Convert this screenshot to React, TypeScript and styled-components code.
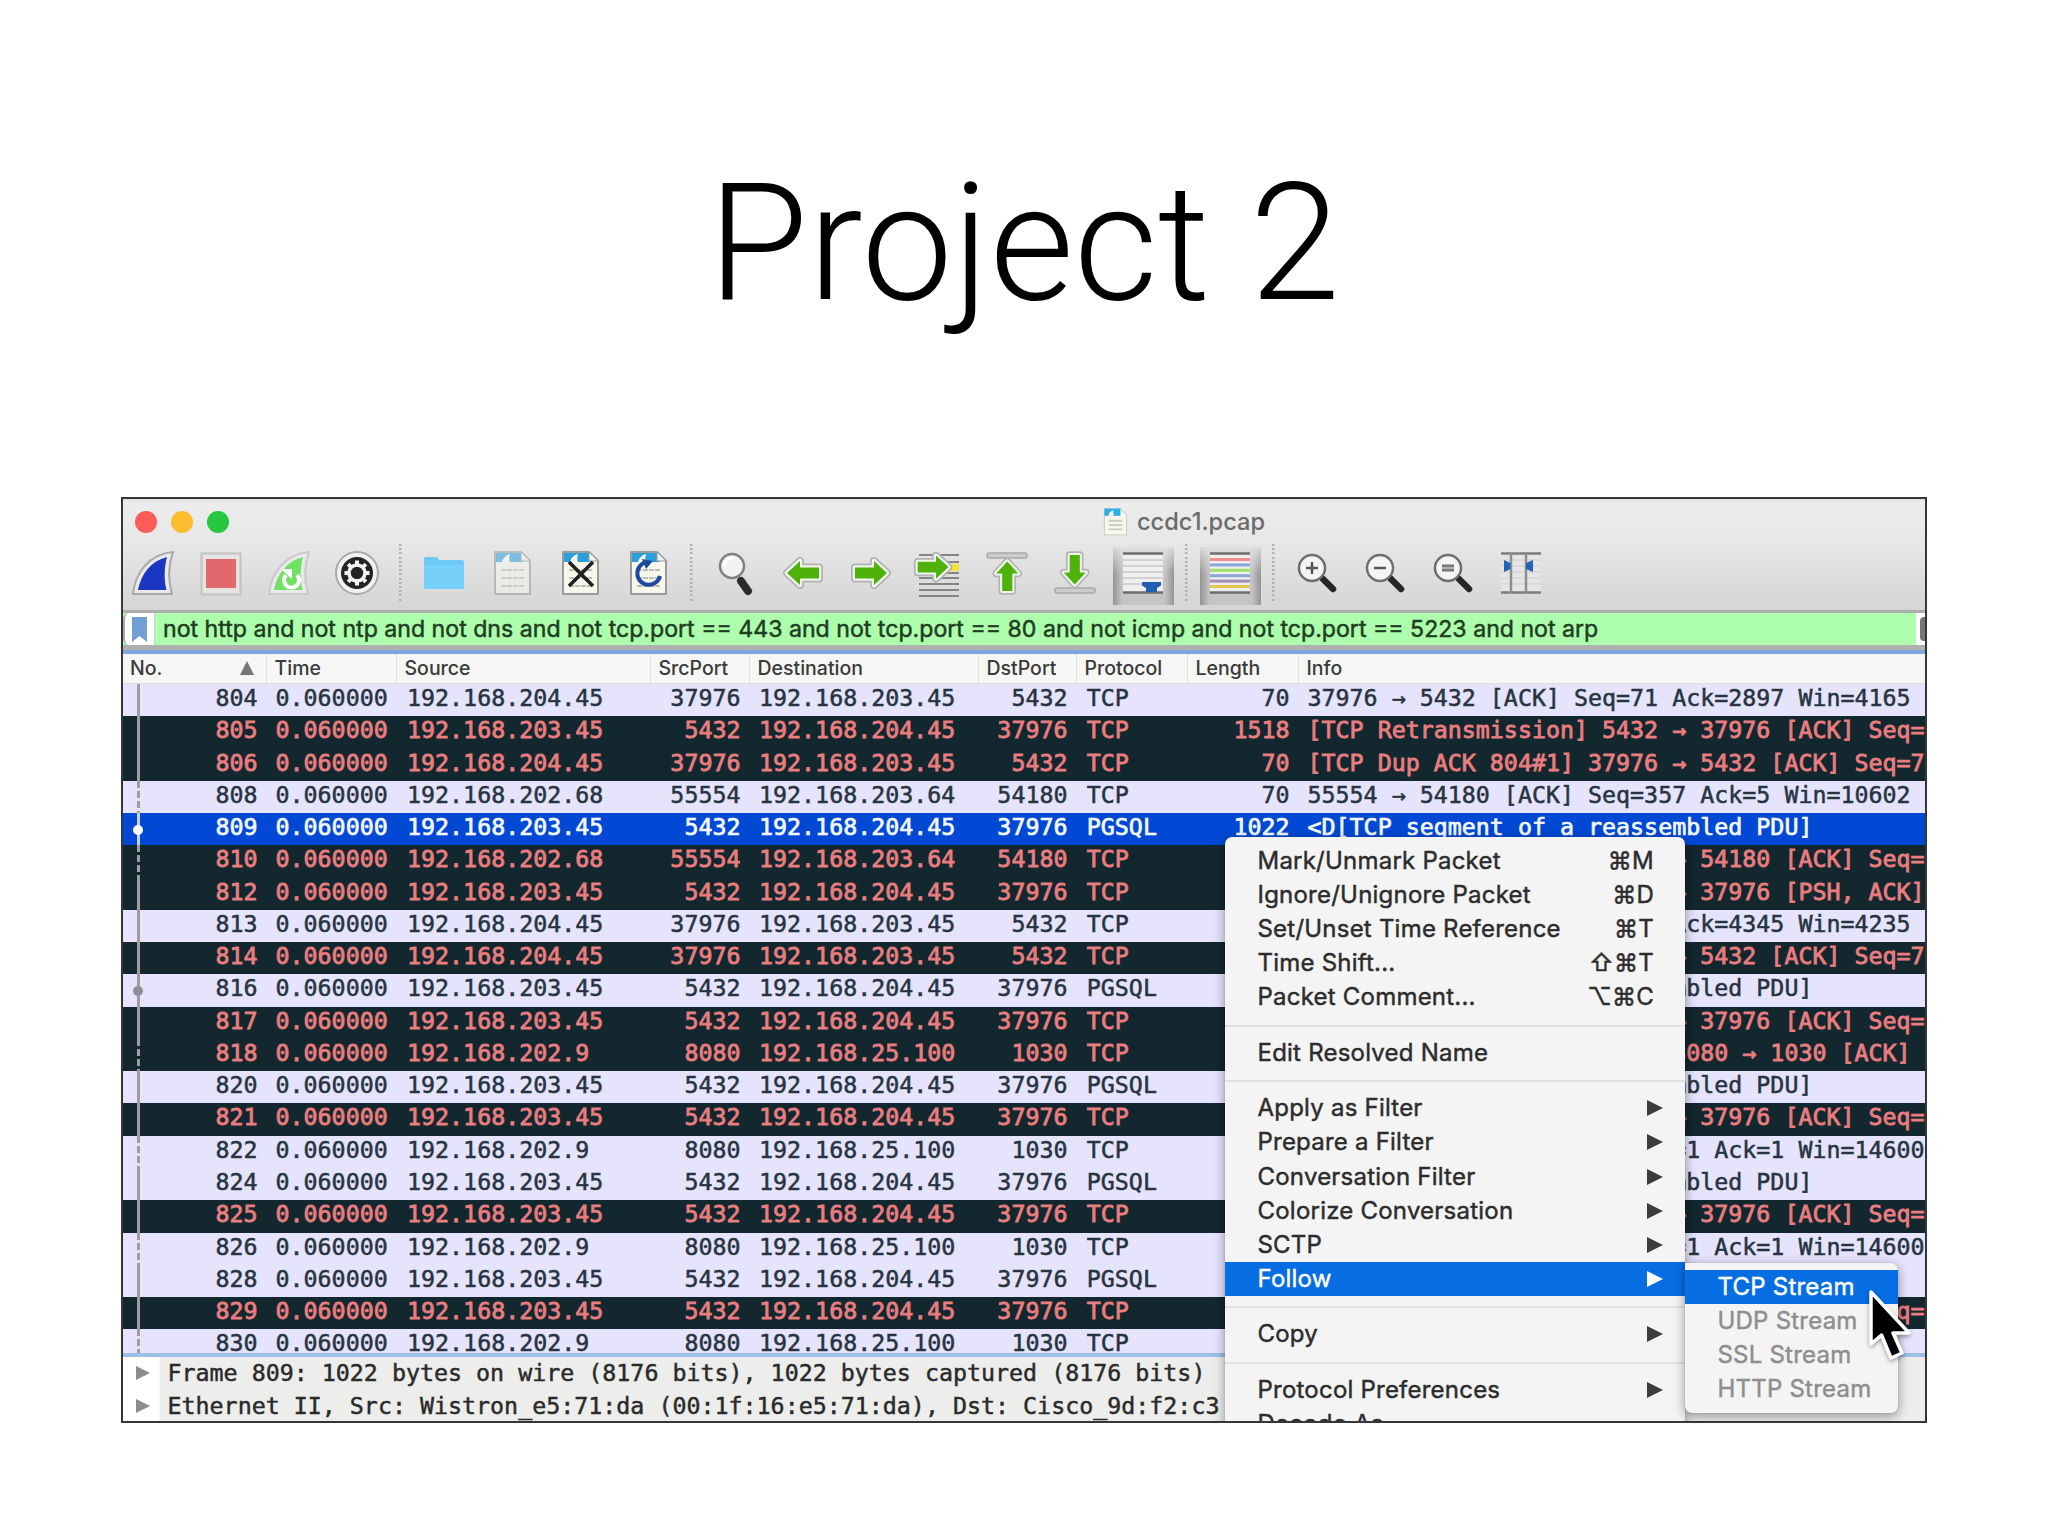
import React from 'react';
import styled, { createGlobalStyle, css } from 'styled-components';

const SANS = `Inter, "Liberation Sans", sans-serif`;
const MONO = `"DejaVu Sans Mono", "Liberation Mono", monospace`;

const Global = createGlobalStyle`
  *, *::before, *::after { box-sizing: border-box; }
  html, body { margin: 0; background: #fff; }
`;

const Slide = styled.main`
  width: 2048px;
  height: 1536px;
  overflow: hidden;
  background: #fff;
  display: flex;
  flex-direction: column;
  padding-left: 121px;
`;

const Title = styled.h1`
  margin: 0;
  width: 1806px;
  height: 497px;
  padding-top: 144px;
  text-align: center;
  font-family: Roboto, "Liberation Sans", sans-serif;
  font-weight: 300;
  font-size: 162.7px;
  line-height: 200px;
  white-space: pre;
  color: #000;
`;

const Window = styled.section`
  position: relative;
  width: 1806px;
  height: 926px;
  border: 2px solid #34363a;
  overflow: hidden;
  display: flex;
  flex-direction: column;
  background: #f5f5f4;
`;

const Chrome = styled.header`
  height: 111px;
  flex: none;
  background: linear-gradient(#e2e2e2 0, #ececec 4px, #e8e8e8 40px, #d6d5d6 111px);
`;

const TitleBar = styled.div`
  height: 45px;
  display: flex;
  align-items: center;
  padding-left: 12px;
`;

const Lights = styled.div`
  display: flex;
  gap: 14px;
  width: 967px;
`;

const Light = styled.span<{ $color: string }>`
  width: 22px;
  height: 22px;
  border-radius: 50%;
  background: ${p => p.$color};
`;

const FileName = styled.span`
  margin-left: 8px;
  font: 500 23.6px/30px ${SANS};
  color: #6b6b6b;
`;

const Toolbar = styled.nav`
  display: flex;
  align-items: center;
  height: 58px;
  margin-left: -3.8px;
`;

const Tool = styled.span<{ $pressed?: boolean }>`
  width: ${p => (p.$pressed ? 61 : 68)}px;
  height: 58px;
  flex: none;
  display: flex;
  align-items: center;
  justify-content: center;
  ${p => p.$pressed && css`
    margin: 5px 3.5px 0;
    padding-bottom: 5px;
    background:
      linear-gradient(rgba(228,228,228,.85), rgba(228,228,228,0) 45%),
      linear-gradient(90deg, #949494, #c4c4c4 9px, #c4c4c4 calc(100% - 9px), #949494);
  `}
  svg { display: block; overflow: visible; }
`;

const Divider = styled.span`
  width: 19px;
  flex: none;
  height: 58px;
  background: repeating-linear-gradient(#b0b0b0 0 2px, transparent 2px 4.2px) center / 2.5px 100% no-repeat;
`;

const FilterBar = styled.div`
  height: 40px;
  flex: none;
  display: flex;
  border-top: 3px solid #adadad;
  border-bottom: 5px solid #b0b0b0;
  background: #adffad;
`;

const Bookmark = styled.span`
  width: 32px;
  display: flex;
  align-items: center;
  justify-content: center;
  background: #fff;
  border-left: 2px solid #aaa;
  border-right: 1px solid #c5d8c5;
  border-radius: 6px 0 0 6px;
`;

const FilterText = styled.span`
  flex: 1;
  padding-left: 8px;
  font: 400 23.14px/32px ${SANS};
  -webkit-text-stroke: 0.5px currentColor;
  white-space: pre;
  color: #1f3d1f;
`;

const ClearButton = styled.span`
  width: 9px;
  background: #fff;
  padding: 4px 0 4px 4px;
  &::before {
    content: '';
    display: block;
    height: 24px;
    border-radius: 4px 0 0 4px;
    background: #777;
  }
`;

const COLS = '143.5px 130px 254px 99px 229px 98px 111px 111px 1fr';

const HeaderRow = styled.div`
  height: 34px;
  flex: none;
  display: grid;
  grid-template-columns: ${COLS};
  border-top: 4px solid #7fa6dc;
  background: #f6f6f5;
  border-bottom: 1px solid #dcdce4;
`;

const HeaderCell = styled.div`
  display: flex;
  align-items: center;
  justify-content: space-between;
  padding: 0 12px 2px 8px;
  border-right: 1px solid #e0e0e0;
  font: 500 19.5px/28px ${SANS};
  color: #3a3a3a;
  &:first-child { padding-left: 7px; }
  &:last-child { border-right: 0; }
`;

const SortMark = styled.i`
  border: 7.5px solid transparent;
  border-top: 0;
  border-bottom: 14px solid #767676;
`;

const List = styled.div`
  height: 669px;
  flex: none;
  overflow: hidden;
`;

type Tone = 'plain' | 'bad' | 'selected';
const tones: Record<Tone, { bg: string; fg: string; weight: number }> = {
  plain: { bg: '#e6e4fd', fg: '#27343f', weight: 0.5 },
  bad: { bg: '#12272e', fg: '#ea7d7f', weight: 0.8 },
  selected: { bg: '#0149d4', fg: '#f4f8ff', weight: 0.7 },
};

const Row = styled.div<{ $tone: Tone }>`
  position: relative;
  height: 32.28px;
  display: grid;
  grid-template-columns: ${COLS};
  background: ${p => tones[p.$tone].bg};
  color: ${p => tones[p.$tone].fg};
  font: 400 23.3px/28px ${MONO};
  -webkit-text-stroke: ${p => tones[p.$tone].weight}px currentColor;
`;

const Cell = styled.span<{ $right?: boolean; $indent?: number }>`
  white-space: pre;
  overflow: hidden;
  text-align: ${p => (p.$right ? 'right' : 'left')};
  padding: 0 9px 0 ${p => (p.$right ? 0 : p.$indent ?? 9)}px;
  &:last-of-type { padding-right: 0; }
`;

const Track = styled.i<{ $dashed: boolean; $selected: boolean }>`
  position: absolute;
  left: 13.5px;
  top: 0;
  width: 3px;
  height: 33px;
  background: ${p => {
    const c = p.$selected ? '#c9d4f2' : '#a39aa2';
    return p.$dashed ? `repeating-linear-gradient(${c} 0 7px, transparent 7px 10px)` : c;
  }};
`;

const Dot = styled.i<{ $selected: boolean }>`
  position: absolute;
  left: 10px;
  top: 12px;
  width: 10px;
  height: 10px;
  border-radius: 50%;
  background: ${p => (p.$selected ? '#fff' : '#8f8b98')};
`;

const Details = styled.div`
  flex: 1;
  border-top: 4px solid #9dbfe6;
  background: linear-gradient(90deg, #fff 36px, #ededeb 37px);
`;

const DetailRow = styled.div`
  height: 32.5px;
  display: flex;
  align-items: center;
  gap: 17.5px;
  padding-left: 13px;
  font: 400 23.3px/32px ${MONO};
  -webkit-text-stroke: 0.45px currentColor;
  white-space: pre;
  color: #2a2a2a;
`;

const Arrow = styled.i<{ $color: string; $size?: number }>`
  flex: none;
  border: ${p => p.$size ?? 8}px solid transparent;
  border-right: 0;
  border-left: ${p => (p.$size ?? 8) * 2}px solid ${p => p.$color};
`;

const Menu = styled.div`
  position: absolute;
  background: #f4f4f4;
  padding: 7px 0;
  border-radius: 7px;
  box-shadow: 0 3px 12px rgba(0, 0, 0, 0.4), 0 0 1px rgba(0, 0, 0, 0.35);
`;

const ContextMenu = styled(Menu)`
  left: 1102px;
  top: 338px;
  width: 460px;
  height: 640px;
`;

const SubMenu = styled(Menu)`
  left: 1562px;
  top: 763.5px;
  width: 213px;
  border-radius: 0 7px 7px 7px;
`;

const MenuItem = styled.div<{ $active?: boolean; $disabled?: boolean }>`
  height: 34.1px;
  display: flex;
  align-items: center;
  justify-content: space-between;
  padding: 0 22px 0 32.5px;
  font: 400 24px/34px ${SANS};
  letter-spacing: 0.22px;
  -webkit-text-stroke: 0.45px currentColor;
  white-space: pre;
  color: ${p => (p.$active ? '#fff' : p.$disabled ? '#8e8e8e' : '#2c2c2c')};
  background: ${p => (p.$active ? '#066de3' : 'transparent')};
`;

const Keys = styled.span`
  margin-right: 9px;
`;

const Rule = styled.hr`
  margin: 10.5px 0 8.9px;
  border: 0;
  height: 2px;
  background: #e0e0e0;
`;

const Pointer = styled.svg`
  position: absolute;
  left: 1743px;
  top: 784px;
  filter: drop-shadow(0 2px 2px rgba(0, 0, 0, 0.35));
`;

/* ---------- icons ---------- */

const Svg = ({ children, w = 44, h = 44 }: { children: React.ReactNode; w?: number; h?: number }) => (
  <svg width={w} height={h} viewBox="0 0 44 44" fill="none">{children}</svg>
);

const Fin = ({ fill, edge, restart }: { fill: string; edge: string; restart?: boolean }) => (
  <Svg>
    <path d="M2 43 C4 22 18 3 42 1 C37 15 37 29 41 43Z" fill="#e9e9e9" stroke={edge} strokeWidth="2" strokeLinejoin="round" />
    <path d="M7 39 C10 23 20 10 36 6 C33 17 33 29 35.500 39Z" fill={fill} />
    {restart && (
      <>
        <path d="M19 24 A7.500 7.500 0 1 0 30 24" stroke="#fff" strokeWidth="4" />
        <path d="M14 18 L25 18 L25 28Z" fill="#fff" />
      </>
    )}
  </Svg>
);

const Stop = () => (
  <Svg>
    <rect x="2.500" y="2.500" width="39" height="41" fill="#e6e4e2" stroke="#c2c2bf" strokeWidth="2" />
    <rect x="7" y="8" width="30" height="29" fill="#e2686c" />
  </Svg>
);

const Gear = () => (
  <Svg>
    <circle cx="22" cy="22" r="21" fill="#f1f1f1" stroke="#a9a9a9" strokeWidth="2" />
    <circle cx="22" cy="22" r="16" fill="#242424" />
    <circle cx="22" cy="22" r="8" stroke="#f4f4f4" strokeWidth="3.500" />
    {[0, 45, 90, 135, 180, 225, 270, 315].map(a => (
      <rect key={a} x="20" y="9.500" width="4" height="4.500" fill="#f4f4f4" transform={`rotate(${a} 22 22)`} />
    ))}
  </Svg>
);

const Folder = () => (
  <Svg>
    <path d="M2 8 Q2 6 4 6 H14 Q16 6 17 9 H40 Q42 9 42 11 V36 Q42 38 40 38 H4 Q2 38 2 36Z" fill="#6cc9f5" />
    <path d="M2 14 H42 V36 Q42 38 40 38 H4 Q2 38 2 36Z" fill="#77d0fa" />
  </Svg>
);

const Sheet = ({ faded, mark }: { faded?: boolean; mark?: 'x' | 'reload' }) => (
  <Svg>
    <g opacity={faded ? 0.55 : 1}>
      <path d="M5 1 H31 L40 10 V43 H5Z" fill="#f7f7ec" stroke="#9b9b9b" strokeWidth="2" strokeLinejoin="round" />
      <path d="M6 2 H31 L34 11 H6Z" fill="#2b9fdc" />
      <path d="M12 11 C13 7 16 4 20 3 C19 6 19 9 20 11Z" fill="#fff" />
      <path d="M31 1 V10 H40Z" fill="#f2f2f2" stroke="#9b9b9b" strokeWidth="1" />
      <path d="M11 19 H34 M11 27 H34 M11 35 H34" stroke="#bdbdb8" strokeWidth="2" strokeDasharray="5 1" />
    </g>
    {mark === 'x' && <path d="M11 11 L35 35 M35 11 L11 35" stroke="#1f1f1f" strokeWidth="3.500" />}
    {mark === 'reload' && (
      <>
        <path d="M21 11 A11.500 11.500 0 1 0 34 25" stroke="#1d4a9e" strokeWidth="4" />
        <path d="M16 8 L27 10 L20 18Z" fill="#1d4a9e" />
      </>
    )}
  </Svg>
);

const Find = () => (
  <Svg>
    <path d="M25 25 L32 35" stroke="#999" strokeWidth="3" />
    <path d="M28 30 L35 40" stroke="#2c2c2c" strokeWidth="8" strokeLinecap="round" />
    <circle cx="19" cy="15" r="12" fill="#f2f2f2" stroke="#808080" strokeWidth="2.500" />
    <path d="M11 15 A9 9 0 0 1 20 7" stroke="#fff" strokeWidth="3" />
  </Svg>
);

const arrowPath = 'M6 22 L19 10 V16.500 H38 V27.500 H19 V34 Z';
const GreenArrow = ({ turn = 0 }: { turn?: number }) => (
  <g transform={`rotate(${turn} 22 22)`}>
    <path d={arrowPath} fill="#f2f2f2" stroke="#b2b2b2" strokeWidth="8" strokeLinejoin="round" />
    <path d={arrowPath} fill="#f2f2f2" stroke="#f0f5ee" strokeWidth="4.500" strokeLinejoin="round" />
    <path d={arrowPath} fill="#4fb20b" />
  </g>
);

const GoTo = () => (
  <Svg>
    <path d="M2 4 H42 M26 11 H42 M26 22 H42 M2 27 H42 M2 33 H42 M2 39 H42 M2 45 H42" stroke="#858585" strokeWidth="2" />
    <rect x="30" y="13" width="12" height="7" fill="#f7e630" />
    <g transform="translate(-5 -5) scale(.96)"><GreenArrow turn={180} /></g>
  </Svg>
);

const Edge = ({ down }: { down?: boolean }) => (
  <Svg>
    <g transform={down ? 'rotate(180 22 22)' : undefined}>
      <rect x="2" y="2" width="40" height="5" rx="2" fill="#ccc" stroke="#a8a8a8" strokeWidth="1.500" />
      <g transform="translate(2 5) scale(.92)"><GreenArrow turn={90} /></g>
    </g>
  </Svg>
);

const AutoScroll = () => (
  <Svg>
    <rect x="2" y="2" width="40" height="40" fill="#efefef" />
    <path d="M2 9 H42 M2 15 H42 M2 21 H42 M2 27 H42 M2 33 H42" stroke="#d2d2d2" strokeWidth="2" />
    <path d="M2 2.500 H42 M2 41.500 H42" stroke="#6d6d6d" strokeWidth="2.500" />
    <path d="M21 31 H40 V34.500 L36 37 V41 H25 V37 L21 34.500Z" fill="#235fb0" />
  </Svg>
);

const stripes = ['#f28b8b', '#8ba5dd', '#9fe066', '#8ba5dd', '#a58fb5', '#e3c64f'];
const Colorize = () => (
  <Svg>
    <rect x="2" y="2" width="40" height="40" fill="#efefef" />
    {stripes.map((c, i) => <rect key={i} x="2" y={7 + i * 5.400} width="40" height="3" fill={c} />)}
    <path d="M2 2.500 H42 M2 41.500 H42" stroke="#6d6d6d" strokeWidth="2.500" />
  </Svg>
);

const Zoom = ({ sign }: { sign: 'plus' | 'minus' | 'equal' }) => (
  <Svg>
    <path d="M28 28 L38 38" stroke="#262626" strokeWidth="6.500" strokeLinecap="round" />
    <circle cx="17" cy="17" r="13" fill="#f5f5f5" stroke="#6e6e6e" strokeWidth="2.500" />
    {sign === 'plus' && <path d="M11 17 H23 M17 11 V23" stroke="#555" strokeWidth="2.500" />}
    {sign === 'minus' && <path d="M11 17 H23" stroke="#555" strokeWidth="2.500" />}
    {sign === 'equal' && <path d="M11 15 H23 M11 19 H23" stroke="#777" strokeWidth="2.800" />}
  </Svg>
);

const ResizeColumns = () => (
  <Svg>
    <rect x="2" y="2" width="40" height="40" fill="#e5e5e3" />
    <path d="M2 9 H42 M2 15 H42 M2 21 H42 M2 27 H42 M2 33 H42" stroke="#d6d6d2" strokeWidth="1.500" />
    <path d="M2 2.500 H42 M2 41.500 H42" stroke="#7c7c7c" strokeWidth="2.500" />
    <path d="M12 2 V42 M27 2 V42" stroke="#8e8e8e" strokeWidth="2.500" />
    <path d="M5 9 L11.500 12 V18 L5 21Z M34 9 L27 12 V18 L34 21Z" fill="#2464b8" />
  </Svg>
);

/* ---------- data ---------- */

type Packet = {
  no: number; src: string; sp: number; dst: string; dp: number; proto: string;
  len: number; info: string; tone: Tone; dashed?: boolean; dot?: boolean;
};

const A = '192.168.204.45';
const B = '192.168.203.45';
const PDU = '<D[TCP segment of a reassembled PDU]';
const RETR = '[TCP Retransmission] 5432 → 37976 [ACK] Seq=';
const PUSH = '8080 → 1030 [PSH, ACK] Seq=1 Ack=1 Win=14600';

const pgsql = (no: number, tone: Tone = 'plain', dot = false): Packet =>
  ({ no, src: B, sp: 5432, dst: A, dp: 37976, proto: 'PGSQL', len: 1022, info: PDU, tone, dot });
const retr = (no: number, info = RETR): Packet =>
  ({ no, src: B, sp: 5432, dst: A, dp: 37976, proto: 'TCP', len: 1518, info, tone: 'bad' });
const web = (no: number, info = PUSH, tone: Tone = 'plain'): Packet =>
  ({ no, src: '192.168.202.9', sp: 8080, dst: '192.168.25.100', dp: 1030, proto: 'TCP', len: 70, info, tone, dashed: true });
const ack = (no: number, info: string, tone: Tone = 'plain'): Packet =>
  ({ no, src: A, sp: 37976, dst: B, dp: 5432, proto: 'TCP', len: 70, info, tone });
const other = (no: number, info: string, tone: Tone = 'plain'): Packet =>
  ({ no, src: '192.168.202.68', sp: 55554, dst: '192.168.203.64', dp: 54180, proto: 'TCP', len: 70, info, tone, dashed: true });

const packets: Packet[] = [
  ack(804, '37976 → 5432 [ACK] Seq=71 Ack=2897 Win=4165'),
  retr(805),
  ack(806, '[TCP Dup ACK 804#1] 37976 → 5432 [ACK] Seq=7', 'bad'),
  other(808, '55554 → 54180 [ACK] Seq=357 Ack=5 Win=10602'),
  pgsql(809, 'selected', true),
  other(810, '[TCP Dup ACK 808#1] 55554 → 54180 [ACK] Seq=', 'bad'),
  retr(812, '[TCP Retransmission] 5432 → 37976 [PSH, ACK]'),
  ack(813, '37976 → 5432 [ACK] Seq=71 Ack=4345 Win=4235'),
  ack(814, '[TCP Dup ACK 813#1] 37976 → 5432 [ACK] Seq=7', 'bad'),
  pgsql(816, 'plain', true),
  retr(817),
  web(818, '[TCP Port numbers reused] 8080 → 1030 [ACK]', 'bad'),
  pgsql(820),
  retr(821),
  web(822),
  pgsql(824),
  retr(825),
  web(826),
  pgsql(828),
  retr(829),
  web(830, '8080 → 1030 [ACK] Seq=1 Ack=1 Win=14600'),
];

const headers = ['No.', 'Time', 'Source', 'SrcPort', 'Destination', 'DstPort', 'Protocol', 'Length', 'Info'];
const FILTER = 'not http and not ntp and not dns and not tcp.port == 443 and not tcp.port == 80 and not icmp and not tcp.port == 5223 and not arp';

type Entry = { label: string; keys?: string; active?: boolean; sub?: boolean };
const menu: Entry[][] = [
  [
    { label: 'Mark/Unmark Packet', keys: '⌘M' },
    { label: 'Ignore/Unignore Packet', keys: '⌘D' },
    { label: 'Set/Unset Time Reference', keys: '⌘T' },
    { label: 'Time Shift...', keys: '⇧⌘T' },
    { label: 'Packet Comment...', keys: '⌥⌘C' },
  ],
  [{ label: 'Edit Resolved Name' }],
  [
    { label: 'Apply as Filter', sub: true },
    { label: 'Prepare a Filter', sub: true },
    { label: 'Conversation Filter', sub: true },
    { label: 'Colorize Conversation', sub: true },
    { label: 'SCTP', sub: true },
    { label: 'Follow', sub: true, active: true },
  ],
  [{ label: 'Copy', sub: true }],
  [{ label: 'Protocol Preferences', sub: true }, { label: 'Decode As...' }],
];

export default function App() {
  return (
    <Slide>
      <Global />
      <Title>Project 2</Title>
      <Window>
        <Chrome>
          <TitleBar>
            <Lights>
              <Light $color="#fc5b57" />
              <Light $color="#fdbc2e" />
              <Light $color="#27c83f" />
            </Lights>
            <Svg w={27} h={28}>
              <path d="M4 1 H30 L40 10 V43 H4Z" fill="#f7f7ec" stroke="#cfd4c8" strokeWidth="2" />
              <path d="M4 0 H30 V12 H4Z" fill="#2faee6" />
              <path d="M10 12 C11 7 15 4 19 3 C18 6 18 9 20 12Z" fill="#fff" />
              <path d="M11 20 H33 M11 27 H33 M11 34 H33" stroke="#c6c9be" strokeWidth="3" />
            </Svg>
            <FileName>ccdc1.pcap</FileName>
          </TitleBar>
          <Toolbar>
            <Tool><Fin fill="#1b36c2" edge="#a9a9a9" /></Tool>
            <Tool><Stop /></Tool>
            <Tool><Fin fill="#6fe163" edge="#c9c9c9" restart /></Tool>
            <Tool><Gear /></Tool>
            <Divider />
            <Tool><Folder /></Tool>
            <Tool><Sheet faded /></Tool>
            <Tool><Sheet mark="x" /></Tool>
            <Tool><Sheet mark="reload" /></Tool>
            <Divider />
            <Tool><Find /></Tool>
            <Tool><Svg><GreenArrow /></Svg></Tool>
            <Tool><Svg><GreenArrow turn={180} /></Svg></Tool>
            <Tool><GoTo /></Tool>
            <Tool><Edge /></Tool>
            <Tool><Edge down /></Tool>
            <Tool $pressed><AutoScroll /></Tool>
            <Divider />
            <Tool $pressed><Colorize /></Tool>
            <Divider />
            <Tool><Zoom sign="plus" /></Tool>
            <Tool><Zoom sign="minus" /></Tool>
            <Tool><Zoom sign="equal" /></Tool>
            <Tool><ResizeColumns /></Tool>
          </Toolbar>
        </Chrome>
        <FilterBar>
          <Bookmark>
            <svg width="15" height="25" viewBox="0 0 15 25"><path d="M0 0 H15 V25 L7.500 19 L0 25Z" fill="#729fd4" /></svg>
          </Bookmark>
          <FilterText>{FILTER}</FilterText>
          <ClearButton />
        </FilterBar>
        <HeaderRow>
          {headers.map((h, i) => <HeaderCell key={h}>{h}{i === 0 && <SortMark />}</HeaderCell>)}
        </HeaderRow>
        <List>
          {packets.map(p => (
            <Row key={p.no} $tone={p.tone}>
              <Cell $right>{p.no}</Cell>
              <Cell>0.060000</Cell>
              <Cell $indent={10.5}>{p.src}</Cell>
              <Cell $right>{p.sp}</Cell>
              <Cell $indent={9.5}>{p.dst}</Cell>
              <Cell $right>{p.dp}</Cell>
              <Cell $indent={10.3}>{p.proto}</Cell>
              <Cell $right>{p.len}</Cell>
              <Cell>{p.info}</Cell>
              <Track $dashed={!!p.dashed} $selected={p.tone === 'selected'} />
              {p.dot && <Dot $selected={p.tone === 'selected'} />}
            </Row>
          ))}
        </List>
        <Details>
          <DetailRow><Arrow $color="#8c8c8c" $size={7} />Frame 809: 1022 bytes on wire (8176 bits), 1022 bytes captured (8176 bits)</DetailRow>
          <DetailRow><Arrow $color="#8c8c8c" $size={7} />Ethernet II, Src: Wistron_e5:71:da (00:1f:16:e5:71:da), Dst: Cisco_9d:f2:c3</DetailRow>
        </Details>
        <ContextMenu>
          {menu.map((group, g) => (
            <React.Fragment key={g}>
              {g > 0 && <Rule />}
              {group.map(e => (
                <MenuItem key={e.label} $active={e.active}>
                  {e.label}
                  {e.keys && <Keys>{e.keys}</Keys>}
                  {e.sub && <Arrow $color={e.active ? '#fff' : '#3c3c3c'} />}
                </MenuItem>
              ))}
            </React.Fragment>
          ))}
        </ContextMenu>
        <SubMenu>
          <MenuItem $active>TCP Stream</MenuItem>
          <MenuItem $disabled>UDP Stream</MenuItem>
          <MenuItem $disabled>SSL Stream</MenuItem>
          <MenuItem $disabled>HTTP Stream</MenuItem>
        </SubMenu>
        <Pointer width="52" height="80" viewBox="0 0 52 80">
          <path d="M5 9 V61 L15.500 52 L25 75 L36 70 L27 50 H43 Z" fill="#000" stroke="#fff" strokeWidth="3.500" strokeLinejoin="round" />
        </Pointer>
      </Window>
    </Slide>
  );
}
